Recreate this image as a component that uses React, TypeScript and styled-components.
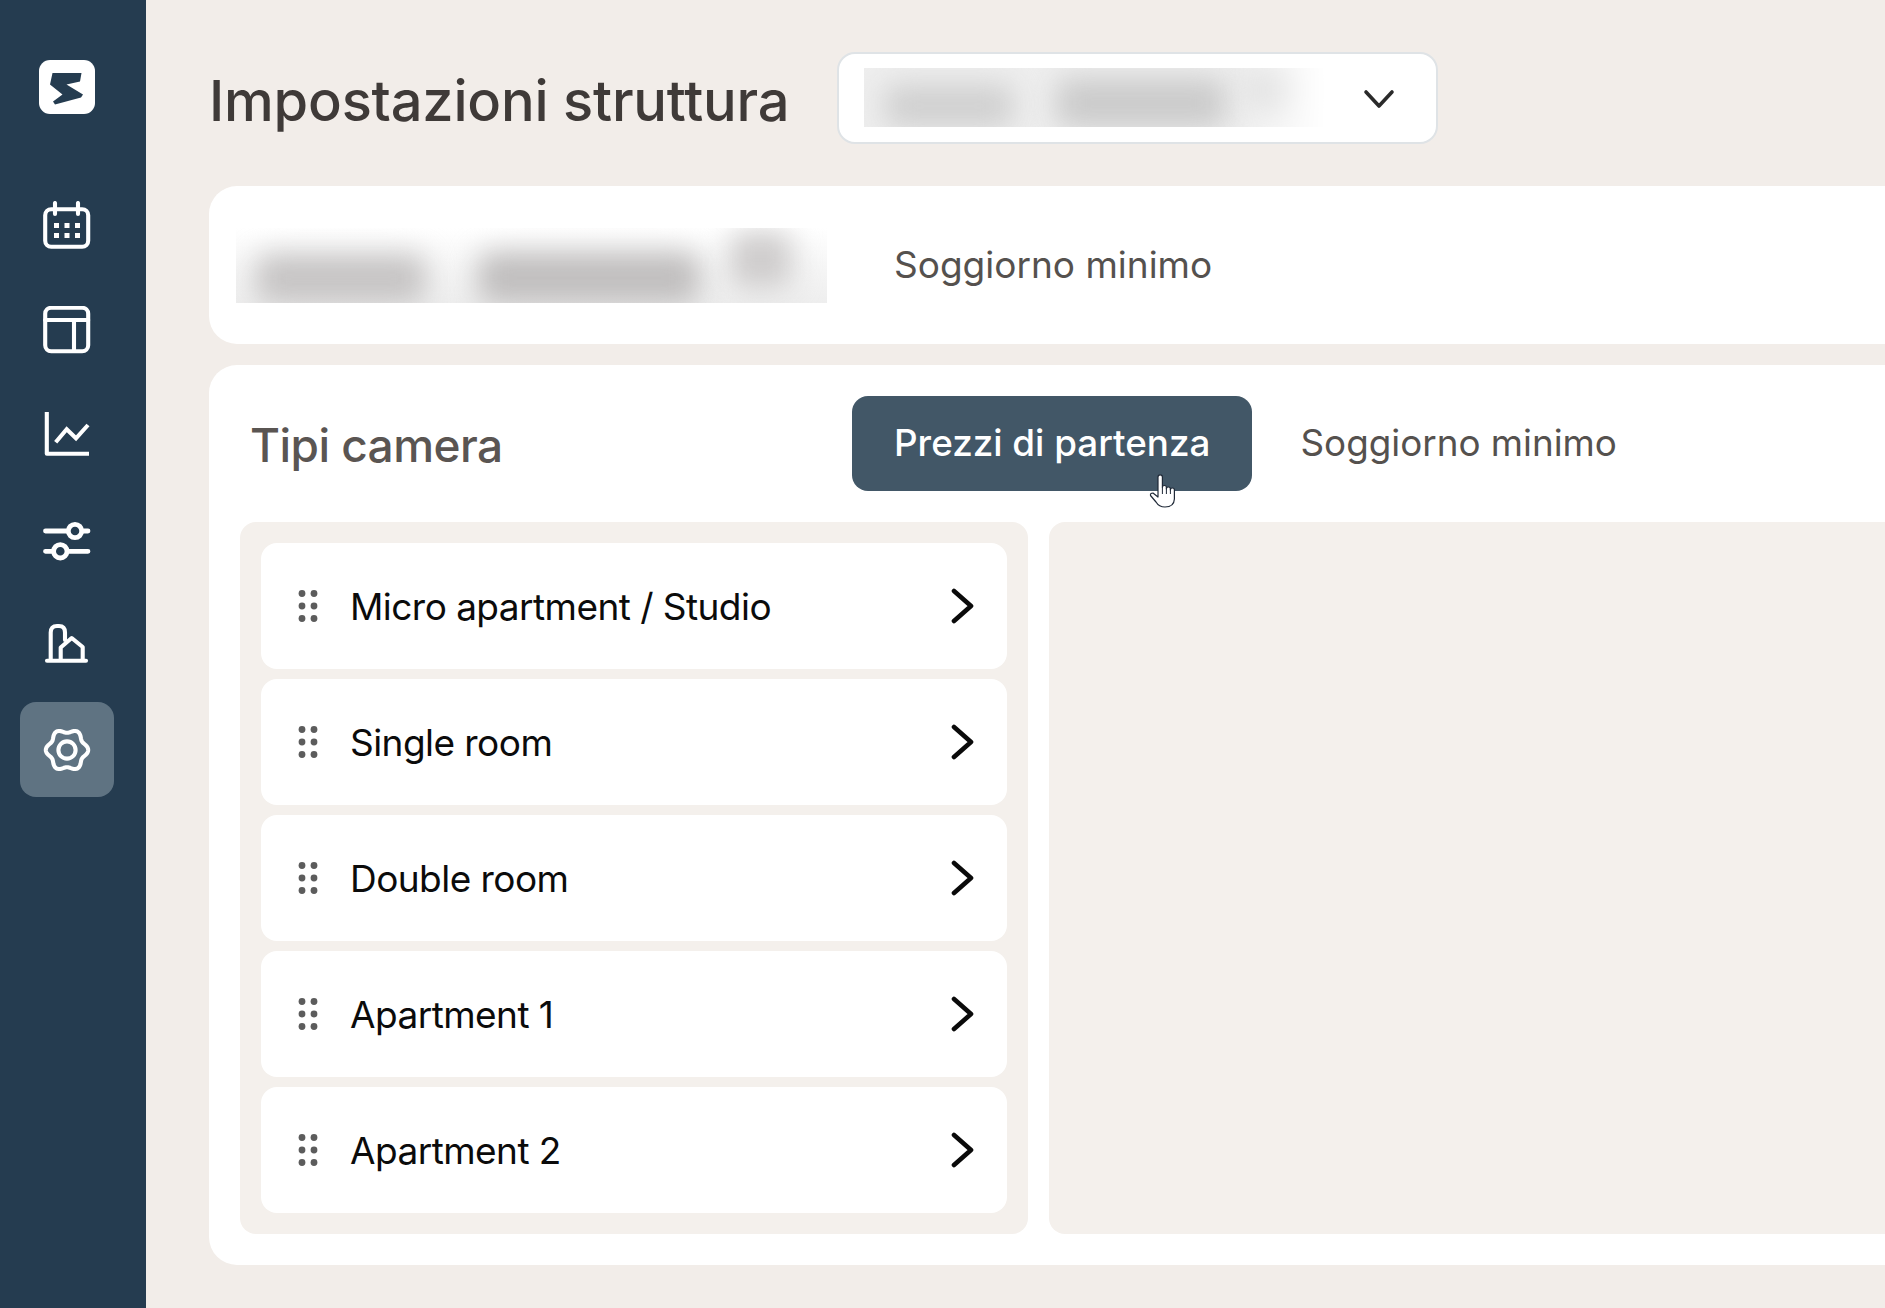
import styled, { createGlobalStyle } from 'styled-components';

const NAVY = '#253c50';
const PAGE = '#f2ede9';
const PANEL = '#f4f0ec';

const GlobalStyle = createGlobalStyle`
  html, body {
    margin: 0;
    height: 100%;
    overflow: hidden;
    background: ${PAGE};
    font-family: Inter, "Liberation Sans", sans-serif;
  }
`;

const Shell = styled.div`
  display: flex;
  height: 1308px;
  overflow: hidden;
`;

const Sidebar = styled.nav`
  flex: 0 0 146px;
  display: flex;
  flex-direction: column;
  align-items: center;
  background: ${NAVY};
  padding: 60px 12px 0 0;
  box-sizing: border-box;
`;

const Logo = styled.svg`
  display: block;
  width: 56px;
  height: 54px;
  margin-bottom: 63px;
`;

const NavList = styled.div`
  display: flex;
  flex-direction: column;
  gap: 10px;
`;

const NavItem = styled.div<{ $active?: boolean }>`
  width: 94px;
  height: 95px;
  display: flex;
  align-items: center;
  justify-content: center;
  border-radius: 16px;
  background: ${(p) => (p.$active ? '#5f7382' : 'transparent')};
`;

const NavIcon = styled.svg`
  display: block;
  width: 48px;
  height: 48px;
  fill: none;
  stroke: #fff;
  stroke-width: 4.1;
  stroke-linecap: round;
  stroke-linejoin: round;
`;

const Main = styled.main`
  flex: 1;
  min-width: 0;
  display: flex;
  flex-direction: column;
  padding: 52px 0 0 63px;
`;

const Header = styled.header`
  display: flex;
  align-items: center;
  gap: 48px;
  height: 91px;
  margin-bottom: 43px;
`;

const Title = styled.h1`
  margin: 6px 0 0;
  font-size: 56px;
  line-height: 64px;
  font-weight: 500;
  letter-spacing: -0.2px;
  color: #3f3a38;
  white-space: nowrap;
`;

const Select = styled.div`
  box-sizing: border-box;
  width: 601px;
  height: 92px;
  display: flex;
  align-items: center;
  justify-content: space-between;
  padding: 0 41px 0 25px;
  background: #fff;
  border: 2px solid #dfe3e6;
  border-radius: 18px;
`;

const Chevron = styled.svg`
  display: block;
  fill: none;
  stroke: currentColor;
  stroke-linecap: round;
  stroke-linejoin: round;
`;

const SelectChevron = styled(Chevron)`
  width: 32px;
  height: 24px;
  margin-top: 3px;
  color: #2a2a2a;
  stroke-width: 3.6;
`;

const Redacted = styled.div<{ $w: number; $h: number; $fade?: boolean }>`
  flex: 0 0 auto;
  width: ${(p) => p.$w}px;
  height: ${(p) => p.$h}px;
  display: flex;
  overflow: hidden;
  background: ${(p) => (p.$fade ? '#eeeeee' : 'linear-gradient(#fff, #f6f6f6 50%, #eeeeee)')};
  ${(p) => (p.$fade ? 'mask-image: linear-gradient(to right, #000 80%, transparent 100%);' : '')}
`;

const Smudge = styled.span<{ $w: number; $h: number; $x: number; $y: number; $tone: string }>`
  flex: 0 0 auto;
  width: ${(p) => p.$w}px;
  height: ${(p) => p.$h}px;
  margin: ${(p) => p.$y}px 0 0 ${(p) => p.$x}px;
  border-radius: 14px;
  background: ${(p) => p.$tone};
  filter: blur(14px);
`;

const TopCard = styled.section`
  display: flex;
  align-items: center;
  height: 158px;
  box-sizing: border-box;
  padding-left: 27px;
  margin-bottom: 21px;
  background: #fff;
  border-radius: 28px 0 0 28px;
`;

const TopLabel = styled.span`
  margin-left: 67px;
  font-size: 37px;
  line-height: 44px;
  color: #55514e;
  white-space: nowrap;
`;

const RoomsCard = styled.section`
  box-sizing: border-box;
  height: 900px;
  padding: 31px 0 31px 31px;
  background: #fff;
  border-radius: 28px 0 0 28px;
`;

const RoomsHead = styled.div`
  display: flex;
  align-items: center;
  height: 95px;
  margin-bottom: 31px;
`;

const RoomsTitle = styled.h2`
  flex: 0 0 612px;
  margin: 3px 0 0;
  padding-left: 10px;
  box-sizing: border-box;
  font-size: 46px;
  line-height: 54px;
  font-weight: 500;
  letter-spacing: -0.55px;
  color: #5a5552;
`;

const Tabs = styled.div`
  display: flex;
  gap: 6px;
`;

const Tab = styled.div<{ $active?: boolean }>`
  position: relative;
  box-sizing: border-box;
  height: 95px;
  display: flex;
  align-items: center;
  padding: 0 42px 2px;
  border-radius: 16px;
  font-size: 36.8px;
  font-weight: ${(p) => (p.$active ? 500 : 400)};
  color: ${(p) => (p.$active ? '#fff' : '#55514e')};
  background: ${(p) => (p.$active ? '#425767' : 'transparent')};
  white-space: nowrap;
`;

const Pointer = styled.svg`
  position: absolute;
  left: 296px;
  top: 77px;
  width: 32px;
  height: 36px;
`;

const Panels = styled.div`
  display: grid;
  grid-template-columns: 788px 1fr;
  gap: 21px;
  height: 712px;
`;

const ListPanel = styled.div`
  display: flex;
  flex-direction: column;
  gap: 10px;
  padding: 21px;
  box-sizing: border-box;
  background: ${PANEL};
  border-radius: 16px;
`;

const DetailPanel = styled.div`
  background: ${PANEL};
  border-radius: 16px 0 0 16px;
`;

const RoomRow = styled.div`
  height: 126px;
  display: flex;
  align-items: center;
  padding: 0 32px 0 35px;
  background: #fff;
  border-radius: 16px;
`;

const DragHandle = styled.svg`
  display: block;
  flex: 0 0 24px;
  width: 24px;
  height: 40px;
  fill: #5c5c5c;
`;

const RoomName = styled.span`
  flex: 1;
  margin: 2px 0 0 30px;
  font-size: 37px;
  line-height: 44px;
  letter-spacing: -0.55px;
  color: #0b0b0b;
  white-space: nowrap;
`;

const RowChevron = styled(Chevron)`
  width: 24px;
  height: 36px;
  color: #0a0a0a;
  stroke-width: 4.6;
`;

// wavy outline of the settings cog
const cogPath = (() => {
  const pts: string[] = [];
  for (let i = 0; i < 120; i += 1) {
    const a = (i / 120) * Math.PI * 2;
    const r = 19.2 + 2 * Math.cos(6 * a + Math.PI);
    pts.push(`${(24 + r * Math.sin(a)).toFixed(2)} ${(24 + r * Math.cos(a)).toFixed(2)}`);
  }
  return `M${pts.join('L')}Z`;
})();

const ROOMS = ['Micro apartment / Studio', 'Single room', 'Double room', 'Apartment 1', 'Apartment 2'];

const App = () => (
  <>
    <GlobalStyle />
    <Shell>
      <Sidebar>
        <Logo viewBox="0 0 56 54">
          <path d="M11 0H45A11 11 0 0 1 56 11V43A11 11 0 0 1 45 54H11A11 11 0 0 1 0 43V11A11 11 0 0 1 11 0Z" fill="#fff" />
          <path d="M13.5 13H42.5L41 21.5L27.5 24.5L44 34.5L42 37.5L16 44.5L14 41.5L23.5 34.5L11 24.5Z" fill={NAVY} />
        </Logo>
        <NavList>
          <NavItem>
            <NavIcon viewBox="0 0 48 48">
              <rect x="2.2" y="8.3" width="43" height="37.5" rx="6" />
              <path d="M12 2V13M35 2V13" />
              <path
                d="M11 22h5v5h-5zM21.5 22h5v5h-5zM32 22h5v5h-5zM11 32h5v5h-5zM21.5 32h5v5h-5zM32 32h5v5h-5z"
                fill="#fff"
                stroke="none"
              />
            </NavIcon>
          </NavItem>
          <NavItem>
            <NavIcon viewBox="0 1 48 48">
              <rect x="2.2" y="2.8" width="43" height="43.4" rx="6" />
              <path d="M2.2 15H45.2M31 15V46" />
            </NavIcon>
          </NavItem>
          <NavItem>
            <NavIcon viewBox="0 1 48 48">
              <path d="M3.8 2V43.8H46" strokeLinecap="butt" />
              <path d="M12.7 32.3L23.7 19.3L33 28.3L45 15" strokeLinecap="butt" strokeLinejoin="miter" />
            </NavIcon>
          </NavItem>
          <NavItem>
            <NavIcon viewBox="0 1 48 48">
              <path d="M2.5 16H45M2.5 36.3H45" strokeWidth="4.8" />
              <circle cx="32" cy="16" r="6.7" fill={NAVY} strokeWidth="4.8" />
              <circle cx="17.3" cy="36.3" r="6.7" fill={NAVY} strokeWidth="4.8" />
            </NavIcon>
          </NavItem>
          <NavItem>
            <NavIcon viewBox="0 1 48 48">
              <path d="M4 40.7H43" />
              <path d="M7.7 40V12.5Q7.7 6 14 6H16Q22 6 22 12.5V20" />
              <path d="M17.7 40V27.5L28.7 18L39.7 27V40" />
            </NavIcon>
          </NavItem>
          <NavItem $active>
            <NavIcon viewBox="0 0 48 48">
              <path d={cogPath} />
              <circle cx="24" cy="24" r="8.6" />
            </NavIcon>
          </NavItem>
        </NavList>
      </Sidebar>

      <Main>
        <Header>
          <Title>Impostazioni struttura</Title>
          <Select>
            <Redacted $w={462} $h={59} $fade>
              <Smudge $w={130} $h={44} $x={20} $y={16} $tone="#d0d0d0" />
              <Smudge $w={170} $h={50} $x={42} $y={10} $tone="#cbcbcb" />
              <Smudge $w={52} $h={44} $x={24} $y={0} $tone="#d6d6d6" />
            </Redacted>
            <SelectChevron viewBox="0 0 32 24">
              <path d="M3 5L16 19L29 5" />
            </SelectChevron>
          </Select>
        </Header>

        <TopCard>
          <Redacted $w={591} $h={75}>
            <Smudge $w={170} $h={50} $x={20} $y={26} $tone="#c6c4c4" />
            <Smudge $w={222} $h={52} $x={52} $y={24} $tone="#c0bebe" />
            <Smudge $w={62} $h={56} $x={30} $y={4} $tone="#cecccc" />
          </Redacted>
          <TopLabel>Soggiorno minimo</TopLabel>
        </TopCard>

        <RoomsCard>
          <RoomsHead>
            <RoomsTitle>Tipi camera</RoomsTitle>
            <Tabs>
              <Tab $active>
                Prezzi di partenza
                <Pointer viewBox="0 0 32 36">
                  <path
                    d="M10 4a2.2 2.2 0 0 1 4.4 0V14.5a2 2 0 0 1 4 0V16a2 2 0 0 1 4 0V17a2 2 0 0 1 4 0V26Q26 34 17 34Q11 34 8 29L2.500 22.500Q2 20 5 20L10 24Z"
                    fill="#fff"
                    stroke="#1f2937"
                    strokeWidth="1.2"
                    strokeLinejoin="round"
                  />
                  <path d="M14.400 14.500V21M18.400 15V21M22.400 16V21" fill="none" stroke="#1f2937" strokeWidth="1" />
                </Pointer>
              </Tab>
              <Tab>Soggiorno minimo</Tab>
            </Tabs>
          </RoomsHead>
          <Panels>
            <ListPanel>
              {ROOMS.map((room) => (
                <RoomRow key={room}>
                  <DragHandle viewBox="0 0 24 40">
                    <circle cx="6" cy="7.500" r="3.400" />
                    <circle cx="18" cy="7.500" r="3.400" />
                    <circle cx="6" cy="20" r="3.400" />
                    <circle cx="18" cy="20" r="3.400" />
                    <circle cx="6" cy="32.500" r="3.400" />
                    <circle cx="18" cy="32.500" r="3.400" />
                  </DragHandle>
                  <RoomName>{room}</RoomName>
                  <RowChevron viewBox="0 0 24 36">
                    <path d="M3 3L20 18L3 33" />
                  </RowChevron>
                </RoomRow>
              ))}
            </ListPanel>
            <DetailPanel />
          </Panels>
        </RoomsCard>
      </Main>
    </Shell>
  </>
);

export default App;
